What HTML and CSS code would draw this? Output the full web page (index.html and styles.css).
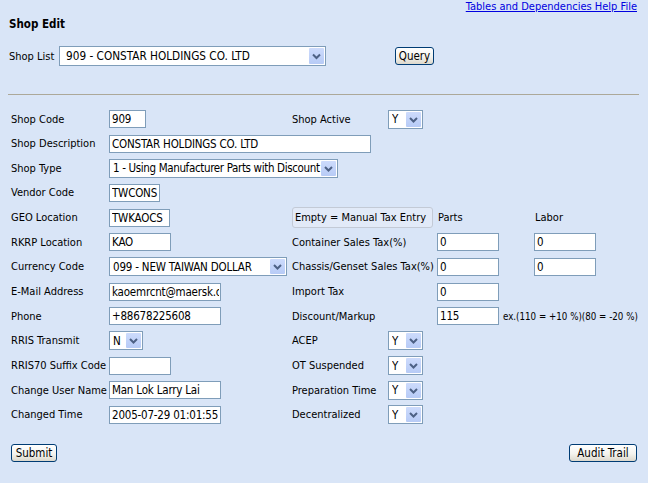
FILE: index.html
```html
<!DOCTYPE html>
<html>
<head>
<meta charset="utf-8">
<title>Shop Edit</title>
<link rel="stylesheet" href="styles.css">
</head>
<body>
<div class="topbar"><a class="help" href="#">Tables and Dependencies Help File</a></div>
<div class="title">Shop Edit</div>
<div class="shoplist">
  <label class="sl-label">Shop List</label>
  <div class="sel w267 h20"><select class="nat pad5"><option>909 - CONSTAR HOLDINGS CO. LTD</option></select><span class="selbtn"><svg width="15" height="16" viewBox="0 0 15 16"><polyline points="4,6.5 7.5,10 11,6.5" fill="none" stroke="#4d6185" stroke-width="2"/></svg></span></div>
  <button class="btn query">Query</button>
</div>
<hr class="rule">
<form class="grid">
  <label class="lbl c1">Shop Code</label>
  <input class="inp w37 c2" value="909">
  <label class="lbl c3">Shop Active</label>
  <div class="sel w35 c4"><select class="nat"><option>Y</option></select><span class="selbtn"><svg width="15" height="15" viewBox="0 0 15 15"><polyline points="4,6 7.5,9.5 11,6" fill="none" stroke="#4d6185" stroke-width="2"/></svg></span></div>

  <label class="lbl c1">Shop Description</label>
  <input class="inp w262 span2" value="CONSTAR HOLDINGS CO. LTD">

  <label class="lbl c1">Shop Type</label>
  <div class="sel w229 span2"><select class="nat tight"><option>1 - Using Manufacturer Parts with Discount</option></select><span class="selbtn"><svg width="15" height="15" viewBox="0 0 15 15"><polyline points="4,6 7.5,9.5 11,6" fill="none" stroke="#4d6185" stroke-width="2"/></svg></span></div>

  <label class="lbl c1">Vendor Code</label>
  <input class="inp w51 c2" value="TWCONS">

  <label class="lbl c1">GEO Location</label>
  <input class="inp w61 c2" value="TWKAOCS">
  <button type="button" class="empty c3span">Empty = Manual Tax Entry</button>
  <span class="colhead c5">Parts</span>
  <span class="colhead c6">Labor</span>

  <label class="lbl c1">RKRP Location</label>
  <input class="inp w62 c2" value="KAO">
  <label class="lbl c3span">Container Sales Tax(%)</label>
  <input class="inp w62 c5" value="0">
  <input class="inp w62 c6" value="0">

  <label class="lbl c1">Currency Code</label>
  <div class="sel w178 c2"><select class="nat"><option>099 - NEW TAIWAN DOLLAR</option></select><span class="selbtn"><svg width="15" height="15" viewBox="0 0 15 15"><polyline points="4,6 7.5,9.5 11,6" fill="none" stroke="#4d6185" stroke-width="2"/></svg></span></div>
  <label class="lbl c3span">Chassis/Genset Sales Tax(%)</label>
  <input class="inp w62 c5" value="0">
  <input class="inp w62 c6" value="0">

  <label class="lbl c1">E-Mail Address</label>
  <input class="inp w112 c2" value="kaoemrcnt@maersk.com">
  <label class="lbl c3span">Import Tax</label>
  <input class="inp w62 c5" value="0">

  <label class="lbl c1">Phone</label>
  <input class="inp w112 c2" value="+88678225608">
  <label class="lbl c3span">Discount/Markup</label>
  <div class="markup">
    <input class="inp w62" value="115">
    <span class="hint">ex.(110 = +10 %)(80 = -20 %)</span>
  </div>

  <label class="lbl c1">RRIS Transmit</label>
  <div class="sel w34 c2"><select class="nat"><option>N</option></select><span class="selbtn"><svg width="15" height="15" viewBox="0 0 15 15"><polyline points="4,6 7.5,9.5 11,6" fill="none" stroke="#4d6185" stroke-width="2"/></svg></span></div>
  <label class="lbl c3">ACEP</label>
  <div class="sel w35 c4"><select class="nat"><option>Y</option></select><span class="selbtn"><svg width="15" height="15" viewBox="0 0 15 15"><polyline points="4,6 7.5,9.5 11,6" fill="none" stroke="#4d6185" stroke-width="2"/></svg></span></div>

  <label class="lbl c1">RRIS70 Suffix Code</label>
  <input class="inp w62 c2" value="">
  <label class="lbl c3">OT Suspended</label>
  <div class="sel w35 c4"><select class="nat"><option>Y</option></select><span class="selbtn"><svg width="15" height="15" viewBox="0 0 15 15"><polyline points="4,6 7.5,9.5 11,6" fill="none" stroke="#4d6185" stroke-width="2"/></svg></span></div>

  <label class="lbl c1">Change User Name</label>
  <input class="inp w112 c2" value="Man Lok Larry Lai">
  <label class="lbl c3">Preparation Time</label>
  <div class="sel w35 c4"><select class="nat"><option>Y</option></select><span class="selbtn"><svg width="15" height="15" viewBox="0 0 15 15"><polyline points="4,6 7.5,9.5 11,6" fill="none" stroke="#4d6185" stroke-width="2"/></svg></span></div>

  <label class="lbl c1">Changed Time</label>
  <input class="inp w112 c2" value="2005-07-29 01:01:55">
  <label class="lbl c3">Decentralized</label>
  <div class="sel w35 c4"><select class="nat"><option>Y</option></select><span class="selbtn"><svg width="15" height="15" viewBox="0 0 15 15"><polyline points="4,6 7.5,9.5 11,6" fill="none" stroke="#4d6185" stroke-width="2"/></svg></span></div>
</form>
<div class="footer">
  <button class="btn submit">Submit</button>
  <button class="btn audit">Audit Trail</button>
</div>
</body>
</html>
```
FILE: styles.css
```css
html, body {
  margin: 0;
  padding: 0;
}
body {
  background: #d9e5f7;
  font-family: "DejaVu Sans Condensed", "DejaVu Sans", sans-serif;
  font-stretch: condensed;
  font-size: 11px;
  color: #000;
}
.topbar {
  display: flex;
  justify-content: flex-end;
  padding: 0 11px 0 0;
  height: 14px;
  line-height: 14px;
}
.help {
  color: #0000e0;
  text-decoration: underline;
  font-size: 11px;
}
.title {
  font-weight: bold;
  font-size: 11.5px;
  line-height: 14px;
  margin: 3px 0 0 9px;
}
.shoplist {
  display: flex;
  align-items: center;
  margin: 15px 0 0 9px;
  height: 20px;
}
.sl-label {
  width: 50px;
}
.sel {
  display: flex;
  align-items: stretch;
  box-sizing: border-box;
  height: 19px;
  border: 1px solid #7f9db9;
  background: #fff;
  padding: 1px;
  align-self: center;
}
.sel.h20 { height: 20px; }
.nat {
  appearance: none;
  -webkit-appearance: none;
  border: 0;
  outline: 0;
  background: transparent;
  flex: 1;
  min-width: 0;
  padding: 0 0 0 2px;
  margin: 0;
  font-family: inherit;
  font-stretch: condensed;
  font-size: 11.5px;
  letter-spacing: -0.2px;
  color: #000;
}
.nat.tight { letter-spacing: -0.35px; }
.nat.pad5 { padding-left: 5px; font-size: 11.7px; letter-spacing: 0; }
.selbtn {
  width: 15px;
  flex: none;
  background: linear-gradient(#cddbfc, #b7cbf6);
  border-radius: 1px;
  display: flex;
  align-items: center;
  justify-content: center;
}
.selbtn svg { display: block; }
.btn {
  box-sizing: border-box;
  height: 18px;
  border: 1px solid #003c74;
  border-radius: 3px;
  background: linear-gradient(#ffffff 0%, #f4f3ee 55%, #dcd8cc 100%);
  font-family: inherit;
  font-stretch: condensed;
  font-size: 11.5px;
  color: #000;
  padding: 0;
  line-height: 14px;
}
.query {
  width: 39px;
  margin-left: 69px;
}
.rule {
  border: 0;
  border-top: 1px solid #aca899;
  height: 0;
  margin: 28px 9px 0 8px;
}
.grid {
  display: grid;
  grid-template-columns: 100px 181px 98px 49px 97px 1fr;
  grid-auto-rows: 20px;
  row-gap: 4.667px;
  margin: 14px 0 0 9px;
  align-items: center;
}
.lbl {
  padding-left: 2px;
  white-space: nowrap;
}
.c1 { grid-column: 1; }
.c2 { grid-column: 2; }
.span2 { grid-column: 2 / 5; }
.c3 { grid-column: 3; }
.c3span { grid-column: 3 / 5; }
.c4 { grid-column: 4; }
.c5 { grid-column: 5; }
.c6 { grid-column: 6; }
.inp {
  box-sizing: border-box;
  height: 18px;
  border: 1px solid #7f9db9;
  background: #fff;
  padding: 0 1px 0 2px;
  margin: 0;
  font-family: inherit;
  font-stretch: condensed;
  font-size: 11.5px;
  letter-spacing: -0.2px;
  color: #000;
  outline: 0;
}
.w34 { width: 34px; }
.w35 { width: 35px; }
.w37 { width: 37px; }
.w51 { width: 51px; }
.w61 { width: 61px; }
.w62 { width: 62px; }
.w112 { width: 112px; }
.w178 { width: 178px; }
.w229 { width: 229px; }
.w262 { width: 262px; }
.w267 { width: 267px; }
.empty {
  box-sizing: border-box;
  margin-left: 2px;
  width: 141px;
  height: 21px;
  border: 1px solid #c3cad6;
  border-radius: 3px;
  background: #e2eaf8;
  font-family: inherit;
  font-stretch: condensed;
  font-size: 11px;
  white-space: nowrap;
  color: #000;
  padding: 0 4px 0 0;
}
.colhead {
  padding-left: 1px;
}
.markup {
  grid-column: 5 / 7;
  display: flex;
  align-items: center;
}
.hint {
  margin-left: 4px;
  font-size: 9.7px;
  white-space: nowrap;
}
.footer {
  display: flex;
  justify-content: space-between;
  margin: 19px 11px 0 11px;
}
.submit { width: 46px; }
.audit { width: 68px; }
```
